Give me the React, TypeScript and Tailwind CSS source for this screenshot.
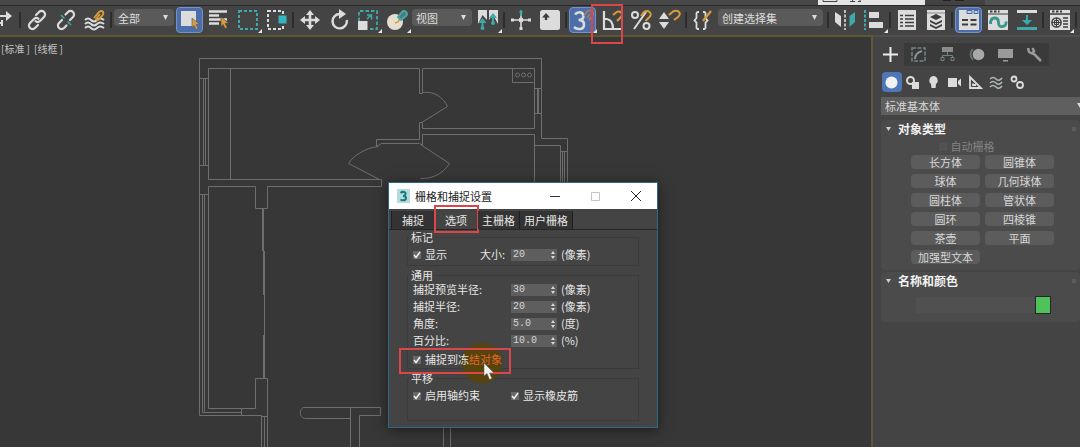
import type { ReactNode } from 'react';
import { clsx } from 'clsx';

const W = '#dcdcdc';
const T = '#3fa8a8';
const O = '#d99c3c';
const D = '#3c3c3c';

function Icon({ children }: { children: ReactNode }) {
  return (
    <svg width="22" height="22" viewBox="0 0 22 22" fill="none" className="shrink-0">
      {children}
    </svg>
  );
}

const icons = {
  link: (
    <Icon>
      <g stroke={W} strokeWidth="2.200" strokeLinecap="round">
        <path d="m10 6 3-3a3.500 3.500 0 0 1 5 5l-4 4a3.500 3.500 0 0 1-4.500.2" />
        <path d="m12 16-3 3a3.500 3.500 0 0 1-5-5l4-4a3.500 3.500 0 0 1 4.500-.2" />
      </g>
    </Icon>
  ),
  unlink: (
    <Icon>
      <g stroke={W} strokeWidth="2.200" strokeLinecap="round">
        <path d="m10.500 5.500 2.500-2.500a3.500 3.500 0 0 1 5 5l-3 3" />
        <path d="m11.500 16.500-2.500 2.500a3.500 3.500 0 0 1-5-5l3-3" />
      </g>
      <path d="m6 6 3.500 3.500M12.500 12.500 16 16" stroke={T} strokeWidth="1.500" />
    </Icon>
  ),
  warp: (
    <Icon>
      <path d="M1 11q3-3 6 0t6 0 7 0M1 15q3-3 6 0t6 0 7 0M1 19q3-3 6 0t6 0 7 0" stroke={W} strokeWidth="2" />
      <path d="m10 9 5-6q3-2 4 0t-1 4l-3 3q-2 2-3 0l4-5" stroke={O} strokeWidth="1.800" />
    </Icon>
  ),
  select: (
    <Icon>
      <path d="M2 2h15v15H2z" fill={W} />
      <path d="m13 9 7.500 6-3.300.5 2 4-2.200 1-1.900-4-2.100 2z" fill={O} stroke="#4a5878" strokeWidth=".6" />
    </Icon>
  ),
  byName: (
    <Icon>
      <path d="M1 2.500h18M1 6.500h10M1 10.500h18M1 14.500h10" stroke={W} strokeWidth="2.400" />
      <path d="m13 8 7.500 6-3.300.5 2 4-2.200 1-1.900-4-2.100 2z" fill={O} stroke="#444" strokeWidth=".6" />
    </Icon>
  ),
  region: (
    <Icon>
      <path d="M2 2h18v18H2z" stroke={T} strokeWidth="2" strokeDasharray="3 2" />
    </Icon>
  ),
  crossing: (
    <Icon>
      <path d="M2 2h15v18H2z" stroke={W} strokeWidth="2" strokeDasharray="3 2" />
      <path d="M12 6h9v9h-9z" fill="#35b5c0" stroke="#444" />
    </Icon>
  ),
  move: (
    <Icon>
      <path d="M11 3v16M3 11h16" stroke={W} strokeWidth="2.600" />
      <path d="m11 1 4 5H7zM11 21l4-5H7zM1 11l5-4v8zM21 11l-5-4v8z" fill={W} />
    </Icon>
  ),
  rotate: (
    <Icon>
      <path d="M12 5a7.200 7.200 0 1 0 6.800 6" stroke={W} strokeWidth="2.400" />
      <path d="m11 0 7 5-7 5z" fill={W} />
    </Icon>
  ),
  scale: (
    <Icon>
      <path d="M2 12V2h18v18h-8" stroke={T} strokeWidth="1.800" strokeDasharray="3.500 2" />
      <path d="M1 12h9.500v9H1z" fill={W} />
      <path d="m10 10 4-4M10 6h4.500v4.500" stroke={T} strokeWidth="1.500" />
    </Icon>
  ),
  place: (
    <Icon>
      <circle cx="9" cy="13" r="8" fill="#e6dfcf" />
      <path d="m9 14 3-1 3-5" stroke={O} strokeWidth="1.500" />
      <path d="m12 8 4-5q2-2 4 0t0 4l-5 4z" stroke={T} strokeWidth="2" fill="#58757a" />
    </Icon>
  ),
  pivot: (
    <Icon>
      <path d="M1 1h9v10L5.500 6 1 15zM12 1h9v14l-5-9-4 5z" fill={W} />
      <path d="M5.500 20v-9M16 15V6" stroke={T} strokeWidth="2" />
      <path d="m5.500 9 4 5h-8zM16 4l4 5h-8z" fill={T} />
      <circle cx="5.500" cy="19" r="2" fill={T} />
      <circle cx="16" cy="14" r="2" fill={T} />
    </Icon>
  ),
  manipulate: (
    <Icon>
      <path d="M11 2v18M2 11h18" stroke={W} strokeWidth="1.600" />
      <path d="M11 1v6" stroke={T} strokeWidth="1.600" />
      <circle cx="11" cy="3" r="1.700" fill={T} />
      <path d="M9 9h4v4H9zM9.500 18h3v3h-3zM1 9.500h3v3H1zM18 9.500h3v3h-3z" fill={W} />
    </Icon>
  ),
  keyboard: (
    <Icon>
      <rect x="1" y="1" width="20" height="20" rx="2.500" fill={W} />
      <path d="m7 4 4 4.500H8.200V11H5.800V8.500H3z" fill={D} />
    </Icon>
  ),
  snap3: (
    <Icon>
      <path
        d="M3 5.500Q5 3 8 3.200t3.500 3.800Q11.500 11 6.500 11 12 11 12 15.500T7.500 20Q4.500 20.300 2 18"
        stroke={W}
        strokeWidth="2.600"
      />
      <path d="m12 7 3-4.500q2.500-2 5 0t0 5l-3 4M15 9l3-4" stroke="#a28060" strokeWidth="1.600" />
    </Icon>
  ),
  angle: (
    <Icon>
      <path d="M3 2v18h17M3 10h3q6 1 6 10" stroke={W} strokeWidth="2.200" />
      <path d="m12 6 3-2.500q3-2 5 0t0 4.500l-4 4" stroke={O} strokeWidth="2" />
    </Icon>
  ),
  percent: (
    <Icon>
      <circle cx="5" cy="6" r="3" stroke={W} strokeWidth="2" />
      <circle cx="16.500" cy="17" r="3" stroke={W} strokeWidth="2" />
      <path d="M16 3 4 20" stroke={W} strokeWidth="2" />
      <path d="m11 7 3-4q3-2 5.500 0t0 5l-4 4" stroke={O} strokeWidth="2" />
    </Icon>
  ),
  spinner: (
    <Icon>
      <path d="m5 3 5 7H0zM5 20l5-7H0z" fill={W} />
      <path d="m10 6 4-3.500q4-1.500 6 .5t-1 5l-4 3" stroke={O} strokeWidth="2" />
    </Icon>
  ),
  braces: (
    <Icon>
      <path d="M7 3H5.500L4.500 4v5L2.500 11.500l2 2V19l1 1H7M11 3h1.500l1 1v5l2 2.500-2 2V19l-1 1H11" stroke={W} strokeWidth="1.800" />
      <path d="m11 12 8-10" stroke={O} strokeWidth="2.200" />
    </Icon>
  ),
  mirror: (
    <Icon>
      <path d="m1 3 6 4v11l-6-5z" fill={W} />
      <path d="M21 3 15.500 7v11l5.500-5z" fill={T} />
      <path d="M11 1v20" stroke={W} strokeWidth="1.600" strokeDasharray="3 1.500" />
    </Icon>
  ),
  align: (
    <Icon>
      <path d="M2 1v20" stroke={T} strokeWidth="2" strokeDasharray="3 1.500" />
      <path d="M6 3h10v6H6zM6 13h14v6H6z" fill={W} />
    </Icon>
  ),
  scene: (
    <Icon>
      <path d="M2 1h18v20H2z" fill={W} />
      <path d="M4 6.500h3M9 6.500h9M4 10h3M9 10h9M4 13.500h3M9 13.500h9M4 17h3M9 17h9" stroke={D} strokeWidth="1.700" />
    </Icon>
  ),
  layers: (
    <Icon>
      <path d="M2 1h18v20H2z" fill={W} />
      <path d="M2 4h18" stroke="#8a8a8a" />
      <path d="m11 5 6 3-6 3-6-3zM5 11l6 3 6-3v2l-6 3-6-3zM5 15l6 3 6-3v2l-6 3-6-3z" fill={D} />
    </Icon>
  ),
  ribbon: (
    <Icon>
      <path d="M1 1h20v20H1z" fill={W} />
      <path d="M9 1.500h5v3H9zM16 1.500h4v3h-4z" fill="#c5d0e6" stroke="#4767a0" />
      <path d="M4 11h6M4 15.500h6M12.500 11h6M12.500 15.500h6" stroke={D} strokeWidth="2.200" />
    </Icon>
  ),
  curve: (
    <Icon>
      <path d="M1 1h20v20H1z" fill={W} />
      <path d="M1 5h20" stroke={D} />
      <path d="M3 2.500h2.500M7 2.500h2.500M11 2.500h1.500" stroke={D} strokeWidth="2" />
      <path d="M3.500 15q0-6 4-6t4 4.500 4 4 3.500-5" stroke="#37958a" strokeWidth="2.800" />
    </Icon>
  ),
  schematic: (
    <Icon>
      <path d="M1 1h20v3H1z" fill={W} />
      <path d="M1 18h20v3H1zM10 6h2v5h4l-5 5-5-5h4z" fill={T} />
    </Icon>
  ),
  material: (
    <Icon>
      <path d="M1 1h20v20H1z" fill={W} />
      <path d="M1 5h20M14 9h5M14 12h5M14 15h5M14 18h5" stroke={D} strokeWidth="1.400" />
      <path d="M3 2.500h2.500M7 2.500h2.500M11 2.500h2" stroke={D} strokeWidth="2" />
      <circle cx="7.500" cy="13.500" r="4.600" stroke={D} strokeWidth="1.500" />
      <path d="M5.500 11.500h4v4h-4zM3 13.500h9M7.500 9v9" stroke={D} />
    </Icon>
  ),
};

type IconName = keyof typeof icons;

function Tool({ icon, label, active, flyout }: { icon: IconName; label: string; active?: boolean; flyout?: boolean }) {
  return (
    <button aria-label={label} className="relative flex h-[26px] w-[29px] shrink-0 items-center justify-center">
      <span
        className={clsx(
          'flex h-[26px] w-[27px] items-center justify-center rounded-sm',
          active && 'border border-[#7193cc] bg-[#4d6ea8]'
        )}
      >
        {icons[icon]}
      </span>
      {flyout && (
        <svg width="4" height="4" className="absolute right-0 bottom-0">
          <path d="M4 0v4H0z" fill="#e8e8e8" />
        </svg>
      )}
    </button>
  );
}

function Sep() {
  return (
    <div className="flex h-[26px] w-1 shrink-0 items-center justify-center">
      <div className="h-4 w-0.5 bg-[#2c2c2c]" />
    </div>
  );
}

function Dropdown({ value, label, className }: { value: string; label: string; className?: string }) {
  return (
    <div className={clsx('relative mx-px mt-0.5 h-[17px] shrink-0', className)}>
      <select
        aria-label={label}
        className="block h-full w-full appearance-none rounded-sm bg-[#5a5a5a] pl-1 text-[11px] leading-[16px] text-[#dedede] outline-none"
      >
        <option>{value}</option>
      </select>
      <svg width="5" height="5" className="pointer-events-none absolute top-1.5 right-1.5">
        <path d="M0 0h5L2.500 5z" fill="#dcdcdc" />
      </svg>
    </div>
  );
}

function Toolbar() {
  return (
    <div className="relative flex h-[30px] shrink-0 items-start border-t border-[#2a2a2a] bg-[#444] pt-px">
      <svg width="18" height="26" className="shrink-0" fill="none">
        <path d="M0 9h8M0 16h2M2 13v6" stroke={W} strokeWidth="2" />
        <path d="m6 4 6 5-6 5z" fill={W} />
      </svg>
      <Sep />
      <Tool icon="link" label="链接" />
      <Tool icon="unlink" label="取消链接" />
      <Tool icon="warp" label="绑定到空间扭曲" />
      <Sep />
      <Dropdown value="全部" label="选择过滤器" className="w-[60px]" />
      <Tool icon="select" label="选择对象" active />
      <Tool icon="byName" label="按名称选择" />
      <Tool icon="region" label="矩形选择区域" flyout />
      <Tool icon="crossing" label="窗口/交叉" />
      <Sep />
      <Tool icon="move" label="移动" />
      <Tool icon="rotate" label="旋转" />
      <Tool icon="scale" label="缩放" flyout />
      <Tool icon="place" label="放置" flyout />
      <Dropdown value="视图" label="参考坐标系" className="w-[60px]" />
      <Tool icon="pivot" label="使用轴点中心" flyout />
      <Sep />
      <Tool icon="manipulate" label="选择并操纵" />
      <Tool icon="keyboard" label="键盘快捷键覆盖" />
      <Sep />
      <Tool icon="snap3" label="捕捉开关" active flyout />
      <div className="relative">
        <Tool icon="angle" label="角度捕捉" />
        <div className="pointer-events-none absolute -top-[3px] right-1 -left-1.5 z-20 h-10 w-8 border-2 border-[#d9474a]" />
      </div>
      <Tool icon="percent" label="百分比捕捉" />
      <Tool icon="spinner" label="微调器捕捉" />
      <Sep />
      <Tool icon="braces" label="编辑命名选择集" />
      <Dropdown value="创建选择集" label="命名选择集" className="w-[105px]" />
      <div className="w-0.5 shrink-0" />
      <Sep />
      <Tool icon="mirror" label="镜像" />
      <Tool icon="align" label="对齐" flyout />
      <Sep />
      <Tool icon="scene" label="场景资源管理器" />
      <Tool icon="layers" label="层资源管理器" />
      <Sep />
      <Tool icon="ribbon" label="显示功能区" active />
      <Tool icon="curve" label="曲线编辑器" />
      <Tool icon="schematic" label="图解视图" />
      <Sep />
      <Tool icon="material" label="材质编辑器" flyout />
      <Sep />
    </div>
  );
}

function FloorPlan() {
  return (
    <svg
      width="870"
      height="410"
      viewBox="0 37 870 410"
      fill="none"
      stroke="#6e6e6e"
      className="absolute top-0 left-0"
    >
      <path d="M261.500 447V415.500H199.500V58.500H541.500V138.500H567.500V200" />
      <path d="M419.500 93.500V68.500H208.500V179.500H381.500V186.500H267.500V208.500H255.500V186.500H208.500V408.500H255.500V378.500H267.500V447" />
      <path d="M230.500 68.500V179.500M419.500 93.500H422.500V68.500H534.500V128.500H422.500V122.500H419.500V139.500H376.500V146.500L381.500 143.500H419.500L422.500 145.500V134.500H534.500V200" />
      <path d="M422.500 92.500C434 91 443 97 447.500 106.500L422.500 122M420.500 144.500 449.500 163.500C443 174 432 179 420.500 178.500M378.500 146.500C365 148 353 156 348.500 163.500L378.500 179" />
      <path d="M512.500 68.500V82.500H533.500M534.500 145.500H560.500V200M560.500 151.500H567.500M562.500 151.500V200M564.500 151.500V200" />
      <circle cx="517.500" cy="75" r="2" />
      <circle cx="523.500" cy="75" r="2" />
      <circle cx="529.500" cy="75" r="2" />
      <path d="M534.500 88.500H541.500M534.500 113.500H541.500M537.500 88.500V113.500M538.500 88.500V113.500" />
      <path d="M199.500 78.500H208.500M199.500 165.500H208.500M203.500 78.500V165.500M205.500 78.500V165.500" />
      <path d="M199.500 194.500H208.500M202.500 194.500V412.500H241M204.500 194.500V411.500M241.500 408.500V415.500" />
      <path d="M263.500 208V251M264.500 251V378M264.500 416V447M261.500 416.500H267" />
      <path d="M262.500 208V251M263.500 251V295M263.500 335V378" />
      <path d="M350.500 447V407.500M350.500 418.500H304.500C299 417 299 409 303.500 407.500H380.500V415.500H359.500V447M443.500 420V447M450.500 420V447" />
    </svg>
  );
}

function Check({ label }: { label: ReactNode }) {
  return (
    <label className="flex items-center gap-1">
      <span className="relative flex h-2 w-2">
        <input type="checkbox" defaultChecked className="h-2 w-2 appearance-none bg-[#686868]" />
        <svg width="8" height="8" fill="none" className="pointer-events-none absolute inset-0">
          <path d="m1 4 2 2.500L7 1" stroke="#f0f0f0" strokeWidth="1.500" />
        </svg>
      </span>
      <span className="relative">{label}</span>
    </label>
  );
}

function Spin({ id, value, unit }: { id: string; value: string; unit: string }) {
  return (
    <>
      <div className="relative h-3 w-[46px]">
        <input
          id={id}
          defaultValue={value}
          className="block h-3 w-full bg-[#5e5e5e] pl-0.5 font-['Liberation_Mono',monospace] text-[10px] leading-3 text-[#d4d4d4] outline-none"
        />
        <svg width="4" height="8" className="absolute top-0.5 right-0.5">
          <path d="M0 3h4L2 0zM0 5h4L2 8z" fill="#d8d8d8" />
        </svg>
      </div>
      <span className="pl-1">{unit}</span>
    </>
  );
}

const snapRows = [
  { id: 'preview', label: '捕捉预览半径:', value: '30', unit: '(像素)' },
  { id: 'radius', label: '捕捉半径:', value: '20', unit: '(像素)' },
  { id: 'angle', label: '角度:', value: '5.0', unit: '(度)' },
  { id: 'percent', label: '百分比:', value: '10.0', unit: '(%)' },
];

const tabs = ['捕捉', '选项', '主栅格', '用户栅格'];

function SnapDialog() {
  return (
    <div
      role="dialog"
      aria-label="栅格和捕捉设置"
      className="absolute top-[145px] left-[388px] w-[270px] border border-[#2d6a86] bg-[#444] text-[11px] text-[#e6e6e6] shadow-[0_2px_12px_rgba(0,0,0,0.5)]"
    >
      <div className="flex h-[26px] items-center bg-white text-[#222]">
        <svg width="13" height="14" fill="none" className="ml-2">
          <path d="M0 0h13v14H0z" fill="#b5dcdc" />
          <path d="M3.500 4Q5 2.500 7 3t1.500 2.200T6 7q3 0 3 2T7 11.200 3.500 10.500" stroke="#157a80" strokeWidth="2" />
        </svg>
        <h2 className="ml-[5px]">栅格和捕捉设置</h2>
        <div className="ml-auto flex">
          <button aria-label="最小化" className="flex w-10 justify-center">
            <svg width="10" height="10" stroke="#333"><path d="M0 5.500h10" /></svg>
          </button>
          <button aria-label="最大化" className="flex w-10 justify-center">
            <svg width="10" height="10" fill="none" stroke="#c4c4c4"><path d="M1.500 1.500h8v8h-8z" /></svg>
          </button>
          <button aria-label="关闭" className="flex w-[42px] justify-center">
            <svg width="10" height="10" stroke="#222"><path d="m0 0 10 10M10 0 0 10" /></svg>
          </button>
        </div>
      </div>

      <div role="tablist" className="mt-0.5 flex h-[19px] border-b border-[#262626] pl-0.5">
        {tabs.map((tab) => (
          <div key={tab} className="relative flex">
            <button
              role="tab"
              aria-selected={tab === '选项'}
              className={clsx(
                'border-r border-[#1f1f1f] leading-[17px]',
                tab === '选项' ? 'bg-[#444] px-2.5' : 'bg-[#333]',
                tab === '捕捉' && 'border-l px-2.5',
                tab === '主栅格' && 'px-1',
                tab === '用户栅格' && 'px-1'
              )}
            >
              {tab}
            </button>
            {tab === '选项' && (
              <div className="pointer-events-none absolute -inset-x-px -top-1.5 -bottom-1 border-2 border-[#d9474a]" />
            )}
          </div>
        ))}
      </div>

      <div className="px-[18px] pt-px pb-1.5">
        <fieldset className="border border-[#3b3b3b] px-[5px] pb-0.5">
          <legend className="-ml-1 px-0.5 leading-3">标记</legend>
          <div className="mt-[3px] flex h-[17px] items-center">
            <div className="w-[67px]"><Check label="显示" /></div>
            <label htmlFor="size" className="w-[31px]">大小:</label>
            <Spin id="size" value="20" unit="(像素)" />
          </div>
        </fieldset>

        <fieldset className="mt-[3px] border border-[#3b3b3b] px-[5px]">
          <legend className="-ml-1 px-0.5 leading-3">通用</legend>
          {snapRows.map((row) => (
            <div key={row.id} className="flex h-[17px] items-center">
              <label htmlFor={row.id} className="w-[98px]">{row.label}</label>
              <Spin id={row.id} value={row.value} unit={row.unit} />
            </div>
          ))}
          <div className="relative mt-0.5 flex h-[17px] items-center">
            <div className="absolute -top-2 left-[49px] h-10 w-10 rounded-full bg-[#57430c] blur-[1px]" />
            <Check label={<>捕捉到冻<span className="text-[#e0662a]">结对象</span></>} />
            <div className="pointer-events-none absolute -top-[3px] -left-3.5 h-[26px] w-28 border-2 border-[#d9474a]" />
            <svg width="12" height="17" className="pointer-events-none absolute top-3 left-[70px]">
              <path d="M1 0v13l3-2.500 2.500 6 2.500-1-2.500-5.500H11z" fill="#f2f2f2" stroke="#555" strokeWidth=".5" />
            </svg>
          </div>
        </fieldset>

        <fieldset className="mt-[3px] border border-[#3b3b3b] px-[5px] pb-4">
          <legend className="-ml-1 px-0.5 leading-3">平移</legend>
          <div className="mt-[3px] flex h-[17px] items-center">
            <div className="w-[98px]"><Check label="启用轴约束" /></div>
            <Check label="显示橡皮筋" />
          </div>
        </fieldset>
      </div>
    </div>
  );
}

const panelTabs = [
  {
    label: '修改',
    art: (
      <>
        <path d="M2 2h13v13H2z" stroke="#6f8686" strokeWidth="1.500" strokeDasharray="4 1.500" />
        <path d="M5 13q0-6 7-8" stroke="#9a9a9a" strokeWidth="1.800" />
      </>
    ),
  },
  {
    label: '层次',
    art: (
      <>
        <path d="M3 1h11v5H3z" fill="#8b8b8b" />
        <path d="M8.500 6v4M3.500 11V9.500h10V11M2 11.500h3v3H2zM12 11.500h3v3h-3z" stroke="#6d8484" />
      </>
    ),
  },
  {
    label: '运动',
    art: (
      <>
        <path d="M5 3q-5 5 0 11" stroke="#5f7070" strokeWidth="2" />
        <circle cx="10.500" cy="8.500" r="5.800" fill="#a8a8a8" />
      </>
    ),
  },
  { label: '显示', art: <path d="M1 3h15v9H1zM6 14h5v1.500H6z" fill="#9a9a9a" /> },
  { label: '实用程序', art: <path d="m15 15-8-8M2 2l1 4 3 1.500L8 5 6.500 2" stroke="#9a9a9a" strokeWidth="2.500" /> },
];

const categories = [
  { label: '几何体', art: <circle cx="8.500" cy="8.500" r="6" fill="#f2f2f2" /> },
  {
    label: '图形',
    art: (
      <>
        <path d="M8 8h7v7H8z" fill={W} />
        <circle cx="6.500" cy="6.500" r="3.500" stroke={W} strokeWidth="2" />
      </>
    ),
  },
  { label: '灯光', art: <path d="M8.500 2a4.500 4.500 0 0 1 2.500 8l-.5 4h-4L6 10a4.500 4.500 0 0 1 2.500-8z" fill={W} /> },
  { label: '摄影机', art: <path d="M2 4h9v9H2zM12 7l3-2.500v8L12 10z" fill={W} /> },
  { label: '辅助对象', art: <path d="M3 3v11h11zM6 9.500V11h3" stroke={W} strokeWidth="1.800" /> },
  {
    label: '空间扭曲',
    art: <path d="M2 5q3-3 6 0t6-1M2 9q3-3 6 0t6-1M2 13q3-3 6 0t6-1" stroke="#b0baba" strokeWidth="1.500" />,
  },
  {
    label: '系统',
    art: (
      <g stroke={W} strokeWidth="1.800">
        <circle cx="5" cy="5" r="2.500" />
        <circle cx="11" cy="11" r="3" />
      </g>
    ),
  },
];

const primitives = [
  '长方体', '圆锥体', '球体', '几何球体', '圆柱体', '管状体',
  '圆环', '四棱锥', '茶壶', '平面', '加强型文本',
];

function Rollout({ title, children }: { title: string; children: ReactNode }) {
  return (
    <section className="rounded-sm bg-[#4b4b4b]">
      <h3 className="flex h-[18px] items-center text-[12px] font-bold text-[#f2f2f2]">
        <svg width="5" height="4" className="mr-[7px] ml-[5px]">
          <path d="M0 0h5L2.500 4z" fill="#cfcfcf" />
        </svg>
        {title}
        <span className="mr-1 ml-auto h-1 w-1 bg-[#5c5c5c]" />
      </h3>
      {children}
    </section>
  );
}

function CommandPanel() {
  return (
    <aside className="w-[207px] shrink-0 border-t-2 border-[#505050] bg-[#444] pt-1.5 pl-2 text-[11px] text-[#d8d8d8]">
      <div className="flex h-[23px] items-center">
        <button aria-label="创建" className="flex w-[23px] pl-0.5">
          <svg width="15" height="15" stroke="#ececec" strokeWidth="2">
            <path d="M7.500 0v15M0 7.500h15" />
          </svg>
        </button>
        <div className="flex h-full bg-[#3a3a3a]">
          {panelTabs.map((tab) => (
            <button key={tab.label} aria-label={tab.label} className="flex w-[29px] items-center justify-center">
              <svg width="17" height="17" fill="none">{tab.art}</svg>
            </button>
          ))}
        </div>
      </div>

      <div className="mt-1.5 flex">
        {categories.map((cat, i) => (
          <button key={cat.label} aria-label={cat.label} className="flex w-[21px] justify-center">
            <span className={clsx('flex h-5 w-5 items-center justify-center rounded-sm', i === 0 && 'bg-[#4f77b8]')}>
              <svg width="17" height="17" fill="none">{cat.art}</svg>
            </span>
          </button>
        ))}
      </div>

      <div className="relative mt-[5px] h-[18px]">
        <select
          aria-label="类别"
          className="block h-full w-full appearance-none bg-[#5f5f5f] pl-1 text-[11px] leading-[18px] outline-none"
        >
          <option>标准基本体</option>
        </select>
        <svg width="3" height="5" className="pointer-events-none absolute top-1.5 right-0">
          <path d="M0 0h6L3 5z" fill="#dcdcdc" />
        </svg>
      </div>

      <div className="mt-[5px] space-y-0.5">
        <Rollout title="对象类型">
          <label className="flex h-[17px] items-center justify-center gap-1 pr-7 text-[#838383]">
            <input type="checkbox" disabled className="h-2 w-2 appearance-none bg-[#525252]" />
            自动栅格
          </label>
          <div className="grid grid-cols-2 gap-x-[5px] gap-y-[5px] pr-[26px] pb-1.5 pl-[30px]">
            {primitives.map((name) => (
              <button key={name} className="h-[14px] rounded-sm bg-[#5c5c5c] leading-[14px] whitespace-nowrap">
                {name}
              </button>
            ))}
          </div>
        </Rollout>
        <Rollout title="名称和颜色">
          <div className="flex items-center pt-1.5 pr-[29px] pb-2 pl-[35px]">
            <input aria-label="名称" className="h-4 w-full min-w-0 bg-[#505050] outline-none" />
            <button aria-label="颜色" className="h-[18px] w-4 shrink-0 border border-[#262626] bg-[#4fc35a]" />
          </div>
        </Rollout>
      </div>
    </aside>
  );
}

function TopStrip() {
  return (
    <div className="flex h-[5px] shrink-0 bg-[#484848]">
      <div className="ml-auto w-[107px] bg-[#e4e4e4]">
        <svg width="107" height="3" fill="none" stroke="#444">
          <path d="M5 0v1.500h14V0M32 1.500h5M40 1.500h3M34.500 0v2M42 0v2" />
        </svg>
      </div>
      <div className="w-[60px] bg-[#424242]">
        <svg width="60" height="2" stroke="#222">
          <path d="M18 .5h8M30 .5h9" />
        </svg>
      </div>
      <div className="w-[95px] bg-[#525252]" />
    </div>
  );
}

export default function App() {
  return (
    <div className="flex min-h-screen flex-col overflow-hidden bg-[#444] font-['Noto_Sans_CJK_SC',sans-serif]">
      <TopStrip />
      <Toolbar />
      <div className="flex flex-1">
        <main className="relative flex-1 overflow-hidden border-t-2 border-r-2 border-t-[#5d562f] border-r-[#64543a] bg-[#373737]">
          <FloorPlan />
          <div className="relative mt-1 flex gap-1 pl-px text-[10px] text-[#c6c6c6]">
            <span>[标准 ]</span>
            <span>[线框 ]</span>
          </div>
          <SnapDialog />
        </main>
        <CommandPanel />
      </div>
    </div>
  );
}
